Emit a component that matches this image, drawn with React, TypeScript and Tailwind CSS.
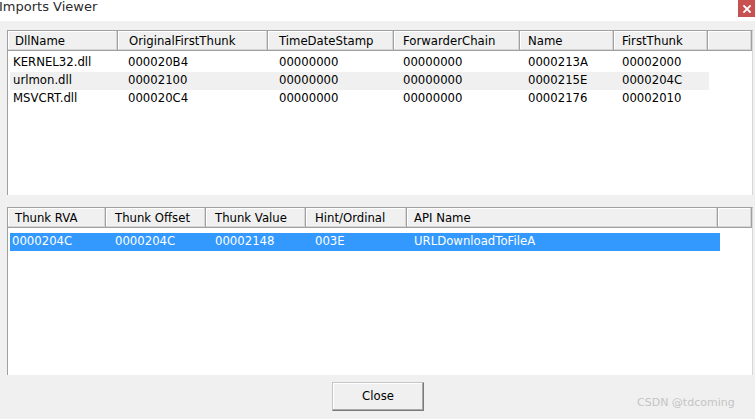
import React from "react";

const list1Cols = [
  { name: "DllName", w: "w-[110px]", hp: "pl-[7px]", rw: "w-[110px]", rp: "pl-[3px]" },
  { name: "OriginalFirstThunk", w: "w-[150px]", hp: "pl-[11px]", rw: "w-[150px]", rp: "pl-[8px]" },
  { name: "TimeDateStamp", w: "w-[126px]", hp: "pl-[11px]", rw: "w-[126px]", rp: "pl-[9px]" },
  { name: "ForwarderChain", w: "w-[126px]", hp: "pl-[9px]", rw: "w-[126px]", rp: "pl-[7px]" },
  { name: "Name", w: "w-[94px]", hp: "pl-[8px]", rw: "w-[94px]", rp: "pl-[6px]" },
  { name: "FirstThunk", w: "w-[94px]", hp: "pl-[8px]", rw: "w-[93px]", rp: "pl-[6px]" },
];

const list1Rows = [
  ["KERNEL32.dll", "000020B4", "00000000", "00000000", "0000213A", "00002000"],
  ["urlmon.dll", "00002100", "00000000", "00000000", "0000215E", "0000204C"],
  ["MSVCRT.dll", "000020C4", "00000000", "00000000", "00002176", "00002010"],
];

const list2Cols = [
  { name: "Thunk RVA", w: "w-[98px]", hp: "pl-[7px]", rw: "w-[98px]", rp: "pl-[2px]" },
  { name: "Thunk Offset", w: "w-[100px]", hp: "pl-[9px]", rw: "w-[100px]", rp: "pl-[7px]" },
  { name: "Thunk Value", w: "w-[100px]", hp: "pl-[9px]", rw: "w-[100px]", rp: "pl-[7px]" },
  { name: "Hint/Ordinal", w: "w-[101px]", hp: "pl-[9px]", rw: "w-[101px]", rp: "pl-[7px]" },
  { name: "API Name", w: "w-[311px]", hp: "pl-[7px]", rw: "w-[311px]", rp: "pl-[5px]" },
];

const list2Rows = [["0000204C", "0000204C", "00002148", "003E", "URLDownloadToFileA"]];

type Col = { name: string; w: string; hp: string; rw: string; rp: string };

function Header({ cols }: { cols: Col[] }) {
  return (
    <div className="flex h-[20px] shrink-0">
      {cols.map((c) => (
        <div
          key={c.name}
          className={`${c.w} ${c.hp} shrink-0 h-full flex items-center pt-[3px] bg-[#f0f0f0] border-r border-b border-[#a0a0a0] shadow-[inset_-1px_-1px_0_#d6d6d6,inset_1px_1px_0_#ffffff] whitespace-nowrap overflow-hidden text-black`}
        >
          {c.name}
        </div>
      ))}
      <div className="flex-1 h-full bg-[#f0f0f0] border-r border-b border-[#a0a0a0] shadow-[inset_-1px_-1px_0_#d6d6d6,inset_1px_1px_0_#ffffff]" />
    </div>
  );
}

function Row({ cols, cells, variant }: { cols: Col[]; cells: string[]; variant: "plain" | "alt" | "sel" }) {
  const bg = variant === "alt" ? "bg-[#f0f0f0]" : variant === "sel" ? "bg-[#3399ff]" : "bg-white";
  const fg = variant === "sel" ? "text-white" : "text-black";
  return (
    <div className={`flex h-[18px] ml-[2px] self-start ${bg} ${fg}`}>
      {cols.map((c, i) => (
        <div key={c.name} className={`${c.rw} ${c.rp} shrink-0 flex items-center whitespace-nowrap overflow-hidden`}>
          {cells[i]}
        </div>
      ))}
    </div>
  );
}

export default function App() {
  return (
    <div className="relative w-[755px] h-[419px] overflow-hidden bg-[#f0f0f0] font-['DejaVu_Sans',sans-serif] text-[11.7px]">
      {/* Title bar */}
      <div className="h-[21px] bg-white flex items-start">
        <span className="-ml-[1px] text-[13px] leading-[13px] text-[#2b2b2b] whitespace-nowrap">Imports Viewer</span>
        <div className="ml-auto w-[17px] h-[17px] bg-[#c75050] flex items-center justify-center">
          <svg width="8" height="8" viewBox="0 0 8 8">
            <path d="M1 1 L7 7 M7 1 L1 7" stroke="#ffffff" strokeWidth="1.8" strokeLinecap="square" />
          </svg>
        </div>
      </div>

      <div className="flex flex-col pl-[7px] pt-[9px]">
        {/* List 1 */}
        <div className="w-[746px] h-[165px] bg-white border-l border-t border-[#a0a0a0] border-r border-r-[#d8d8d8] flex flex-col">
          <Header cols={list1Cols} />
          <div className="flex flex-col pt-[3px]">
            {list1Rows.map((r, i) => (
              <Row key={i} cols={list1Cols} cells={r} variant={i === 1 ? "alt" : "plain"} />
            ))}
          </div>
        </div>

        {/* List 2 */}
        <div className="mt-[12px] w-[746px] h-[168px] bg-white border-l border-t border-[#a0a0a0] border-r border-r-[#d8d8d8] flex flex-col">
          <Header cols={list2Cols} />
          <div className="flex flex-col pt-[5px]">
            {list2Rows.map((r, i) => (
              <Row key={i} cols={list2Cols} cells={r} variant="sel" />
            ))}
          </div>
        </div>

        {/* Button row */}
        <div className="flex pt-[7px] pl-[325px]">
          <button className="w-[92px] h-[29px] bg-[#f0f0f0] border border-t-[#c4c4c4] border-l-[#c4c4c4] border-r-[#7a7a7a] border-b-[#7a7a7a] shadow-[inset_-1px_-1px_0_#a8a8a8,inset_1px_1px_0_#ffffff] text-black text-[11.7px] flex items-center justify-center">
            Close
          </button>
        </div>
      </div>

      {/* Watermark */}
      <div className="absolute left-[637px] top-[396px] text-[11px] leading-[14px] text-[#c4c4c4] whitespace-nowrap">
        CSDN @tdcoming
      </div>
    </div>
  );
}
